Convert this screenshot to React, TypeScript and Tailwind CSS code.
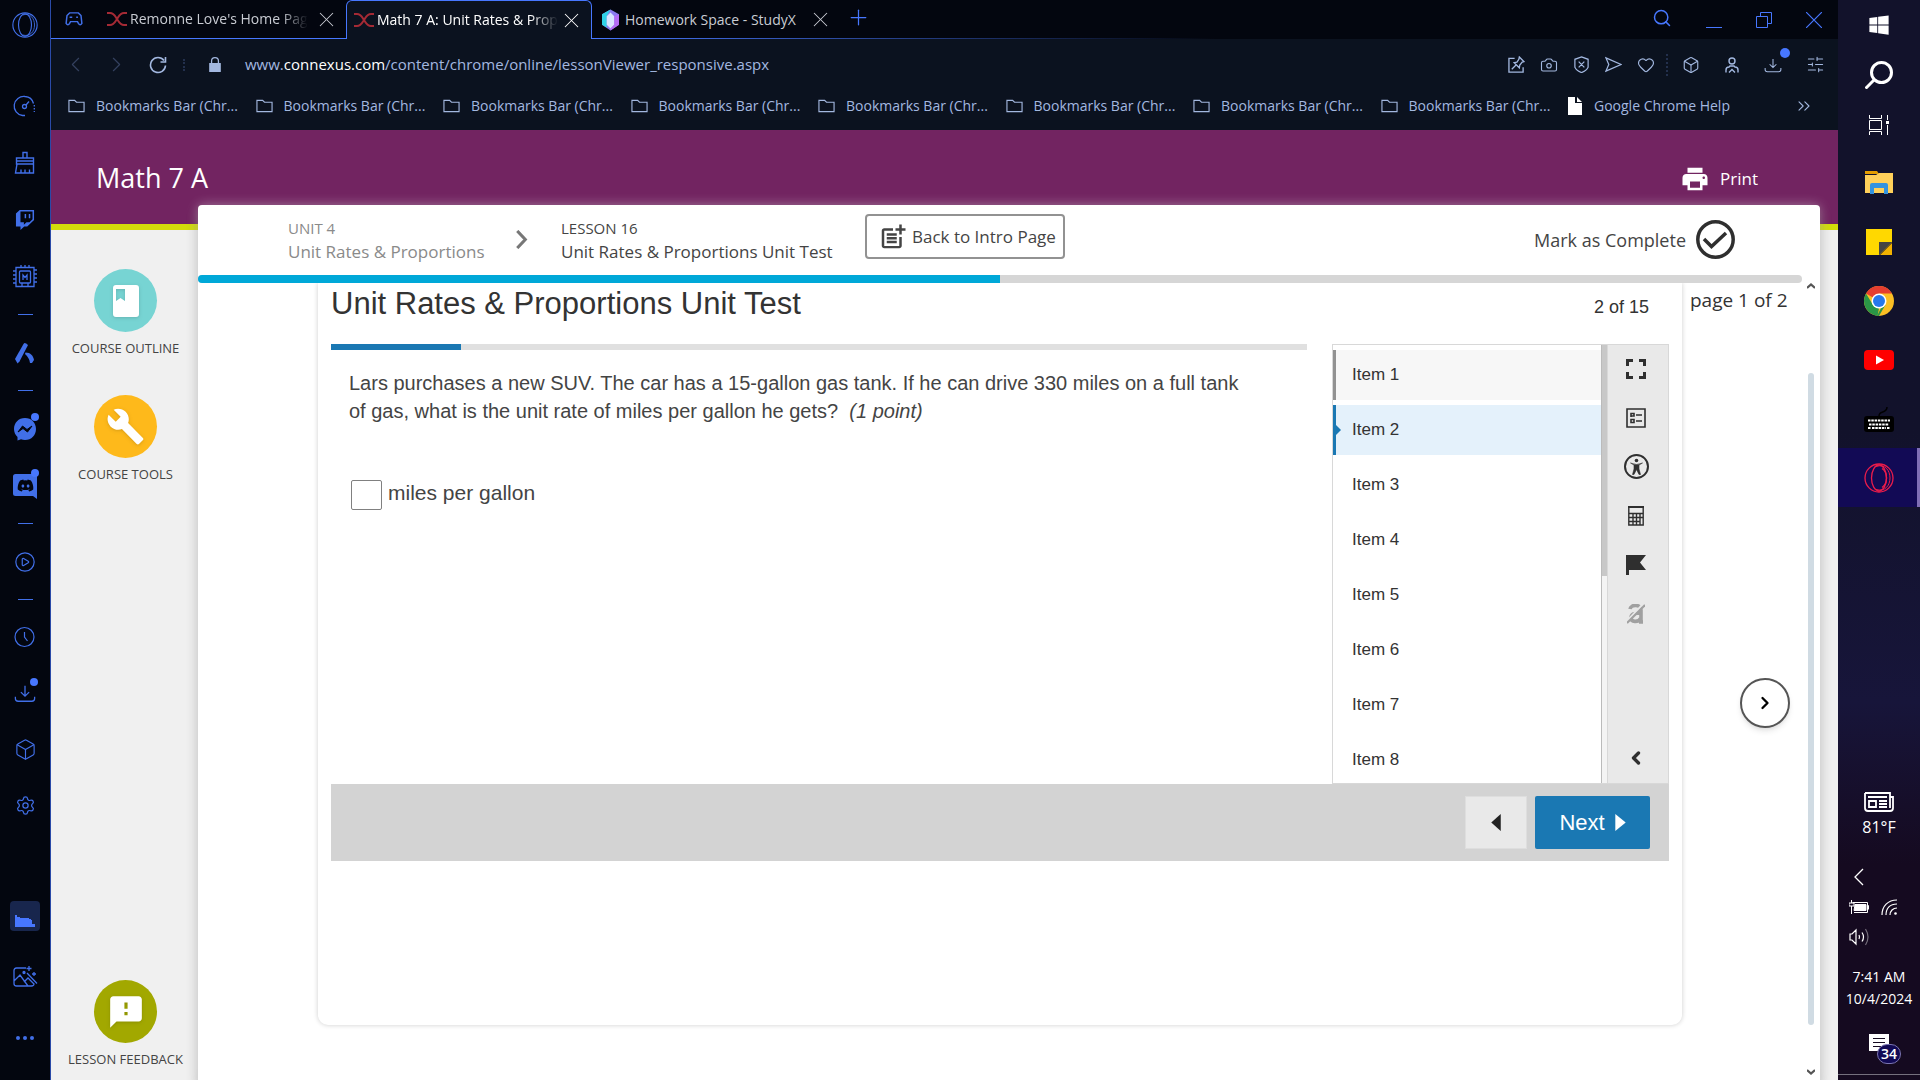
import type { ReactNode } from 'react';
import {
  Box,
  Camera,
  ChevronLeft,
  ChevronRight,
  ChevronsRight,
  CirclePlay,
  Heart,
  Plus,
  Search,
  Settings,
  SlidersHorizontal,
  X,
} from 'lucide-react';
import { FaDiscord, FaTwitch, FaWindows } from 'react-icons/fa';
import { MdBuild, MdFeedback, MdPostAdd, MdPrint } from 'react-icons/md';

const bookmarks = Array.from({ length: 8 }, (_, i) => ({ id: i, label: 'Bookmarks Bar (Chr...' }));

const items = Array.from({ length: 8 }, (_, i) => i + 1);

function OperaIcon({ className, inner }: { className: string; inner?: boolean }) {
  return (
    <svg viewBox="0 0 30 30" className={className} fill="none" stroke="currentColor" strokeWidth="1.3">
      <circle cx="15" cy="15" r="14" />
      <ellipse cx="15" cy="15" rx="7.5" ry="13" />
      {inner && <path d="M18 5.5c6 4 6 15 0 19" />}
      <path d="M12 3.5c9-3 14 4 14 11.5s-5 14-14 11.5" strokeWidth="1" />
    </svg>
  );
}

function Dot() {
  return <span className="absolute -top-1 -right-0.5 size-2 rounded-full bg-[#4777ff]" />;
}

function GaugeIcon() {
  return (
    <svg viewBox="0 0 24 24" className="size-6" fill="none" stroke="currentColor" strokeWidth="1.3">
      <path d="M12 21.5H9.5A9.5 9.5 0 0 1 12 2.5a9.5 9.5 0 0 1 8.5 7" />
      <path d="M21.3 11v7" strokeDasharray="1.5 1.5" />
      <circle cx="11.5" cy="12.5" r="2" />
      <path d="m13 11 3-3.5" />
    </svg>
  );
}

function BrushIcon() {
  return (
    <svg viewBox="0 0 24 24" className="size-6" fill="none" stroke="currentColor" strokeWidth="1.4">
      <path d="M10 7V1.5h4V7M3.5 7h17v6h-17zM3.5 10h17M4 13 2.5 22h18v-9M8 21.5v-3M12 21.5v-3M16.5 21.5v-3" />
    </svg>
  );
}

function ChipIcon() {
  return (
    <svg viewBox="0 0 26 26" className="size-[26px]" fill="none" stroke="currentColor" strokeWidth="1.3">
      <path d="M4 3.5h18v19H4z" />
      <rect x="7.5" y="7" width="11" height="12" rx="1" />
      <path d="M11 16v-5l2 2.5 2-2.5v5M9 1v2M13 1v2M17 1v2M1 7h3M1 11h3M1 15h3M1 19h3M22 6h3M22 10h3M22 14h3M22 18h3M10 19v3M16 19v3" />
    </svg>
  );
}

function AriaIcon() {
  return (
    <svg viewBox="0 0 24 24" className="size-6" fill="currentColor">
      <path d="M10.5 3q1-1.5 2.5-.5L15 4 6.5 20.5l-2 2L2 18z" />
      <path d="M12.5 11.5c5 0 8 3.5 8.5 7.5l-2 3h-2c-.5-4-2-6-5-9z" />
    </svg>
  );
}

function MessengerIcon() {
  return (
    <svg viewBox="0 0 24 24" className="size-6" fill="currentColor">
      <path d="M12 1C5.5 1 1 5.8 1 12c0 3.3 1.3 6 3.5 8v3.5L8 22.3c1.2.4 2.6.7 4 .7 6.5 0 11-4.8 11-11S18.5 1 12 1Z" />
      <path d="m5 15 4.5-6 4.5 3.5L19 9l-4.500 6-4.500-3.500z" fill="#03060f" stroke="#03060f" />
    </svg>
  );
}

function DiscordIcon() {
  return (
    <span className="grid place-items-center text-[#03060f]">
      <svg viewBox="0 0 24 26" className="col-start-1 row-start-1 h-[26px] w-6" fill="#416fe8">
        <path d="M2.5 1h19Q24 1 24 3.5V26l-4-3H2.5Q0 23 0 20.5v-17Q0 1 2.5 1Z" />
      </svg>
      <FaDiscord size={17} className="col-start-1 row-start-1" />
    </span>
  );
}

function ClockIcon() {
  return (
    <svg viewBox="0 0 24 24" className="size-6" fill="none" stroke="currentColor" strokeWidth="1.2">
      <circle cx="11.5" cy="12" r="9.5" />
      <path d="M11.5 7v5l3 4" />
    </svg>
  );
}

function DownloadIcon({ className }: { className: string }) {
  return (
    <svg viewBox="0 0 24 24" className={className} fill="none" stroke="currentColor" strokeWidth="1.4">
      <path d="M12 4v11M7.5 11l4.5 4.5 4.5-4.5M1.500 16v2q0 3 3 3h15q3 0 3-3v-2" />
    </svg>
  );
}

function ImageIcon() {
  return (
    <svg viewBox="0 0 26 26" className="size-[26px]" fill="none" stroke="currentColor" strokeWidth="1.3">
      <path d="M14 4H4.5Q2 4 2 6.5v13Q2 22 4.5 22h15q2.5 0 2.5-2.5M2 17l6-6 8 11M12 18l4-4 6 6M15 9l10 10.5M17 2v5M14.5 4.5h5M22 8v4M20 10h4" />
      <circle cx="12" cy="8.5" r="1" fill="currentColor" />
    </svg>
  );
}

function StudentFavicon() {
  return (
    <svg viewBox="0 0 20 14" className="h-3.5 w-5 shrink-0" fill="none" stroke="#a52a35" strokeWidth="2">
      <path d="M0 1h3c4 0 5 3 7 6s3 6 7 6h3M20 1h-3c-4 0-5 3-7 6s-3 6-7 6H0" />
    </svg>
  );
}

function GemFavicon() {
  return (
    <svg viewBox="0 0 18 22" className="h-[22px] w-[17px] shrink-0">
      <path d="m9 0 9 5v11l-9 6-9-6V5z" fill="#8b7bf0" />
      <path d="M9 0 0 5v11l5 3V7z" fill="#2fd3e8" />
      <path d="m5 7 4-4 4 4v9l-4 4-4-4z" fill="#d9e4ff" />
      <path d="m13 7 5-2v11l-9 6v-2l4-4z" fill="#b56cf5" />
    </svg>
  );
}

function Slot({ children, label, tall }: { children: ReactNode; label: string; tall?: boolean }) {
  return (
    <button
      aria-label={label}
      className={`flex w-full shrink-0 items-center justify-center ${tall ? 'h-[57px]' : 'h-14'}`}
    >
      {children}
    </button>
  );
}

function Divider() {
  return (
    <div className="flex h-[19px] shrink-0 items-center justify-center">
      <span className="h-px w-[15px] bg-[#416fe8]" />
    </div>
  );
}

function OperaSidebar() {
  return (
    <nav className="flex w-[51px] shrink-0 flex-col border-r border-[#2a4aa8] bg-[#03060f] text-[#416fe8]">
      <button aria-label="Opera menu" className="mb-[27px] flex h-[50px] shrink-0 items-center justify-center">
        <OperaIcon className="size-[26px]" />
      </button>
      <Slot tall label="Limiter"><GaugeIcon /></Slot>
      <Slot tall label="Cleaner"><BrushIcon /></Slot>
      <Slot tall label="Twitch"><FaTwitch size={20} /></Slot>
      <Slot tall label="Mods"><ChipIcon /></Slot>
      <Divider />
      <Slot tall label="Aria"><AriaIcon /></Slot>
      <Divider />
      <Slot tall label="Messenger">
        <span className="relative"><MessengerIcon /><Dot /></span>
      </Slot>
      <Slot tall label="Discord">
        <span className="relative"><DiscordIcon /><Dot /></span>
      </Slot>
      <Divider />
      <Slot tall label="Player"><CirclePlay size={22} strokeWidth={1.3} /></Slot>
      <Divider />
      <Slot label="History"><ClockIcon /></Slot>
      <Slot label="Downloads">
        <span className="relative"><DownloadIcon className="size-[22px]" /><Dot /></span>
      </Slot>
      <Slot label="Extensions"><Box size={23} strokeWidth={1.2} /></Slot>
      <Slot label="Settings"><Settings size={21} strokeWidth={1.4} /></Slot>
      <div className="mt-auto flex flex-col gap-[5px] pb-3.5">
        <Slot label="Wallpaper">
          <span className="flex size-[30px] items-end justify-center rounded bg-[#18264d] pb-1">
            <svg viewBox="0 0 20 12" className="h-3 w-5" fill="#4777ff">
              <path d="M0 0h2v2h3v1h9v1h2v1h1v4h3v3H0z" />
            </svg>
          </span>
        </Slot>
        <Slot label="Image tools"><ImageIcon /></Slot>
        <Slot label="More">
          <span className="flex gap-[3px]">
            <span className="size-1 rounded-full bg-current" />
            <span className="size-1 rounded-full bg-current" />
            <span className="size-1 rounded-full bg-current" />
          </span>
        </Slot>
      </div>
    </nav>
  );
}

function CloseTab() {
  return (
    <button aria-label="Close tab" className="mr-[7px] ml-auto">
      <X size={25} strokeWidth={1} />
    </button>
  );
}

function TabBar() {
  return (
    <div className="flex h-[39px] text-sm whitespace-nowrap text-[#c9ccd3]">
      <div className="flex w-[295px] items-center border-b border-[#4777ff]">
        <svg viewBox="0 0 20 16" className="mr-6 ml-[14px] h-3.5 w-[18px] text-[#416fe8]" fill="none" stroke="currentColor" strokeWidth="1.7">
          <path d="M5 1h10l3 3 1 9q-2 3-4 0l-1-2H6l-1 2q-2 3-4 0l1-9z" />
          <path d="M5 6h3M12.500 6h2" />
        </svg>
        <StudentFavicon />
        <span className="ml-[3px] mask-r-from-85%">Remonne Love's Home Pag</span>
        <CloseTab />
      </div>
      <div className="flex w-[246px] items-center rounded-t-md border border-b-0 border-[#4777ff] bg-[#0b121f] pl-[7px] text-white">
        <StudentFavicon />
        <span className="ml-[3px] mask-r-from-85%">Math 7 A: Unit Rates &amp; Prop</span>
        <CloseTab />
      </div>
      <div className="relative flex flex-1 items-center pl-[10px]">
        <GemFavicon />
        <span className="ml-1.5 w-[178px]">Homework Space - StudyX</span>
        <button aria-label="Close tab" className="ml-[5px]"><X size={25} strokeWidth={1} /></button>
        <button aria-label="New tab" className="ml-[13px] pb-1 text-[#4777ff]"><Plus size={25} strokeWidth={1.2} /></button>
        <div className="absolute bottom-0 left-0 h-px w-1/2 bg-linear-to-r from-[#4777ff] to-transparent" />
        <div className="mr-4 ml-auto flex items-center gap-[34px] text-[#4777ff]">
          <button aria-label="Search tabs" className="pb-1">
            <Search size={20} strokeWidth={1.8} />
          </button>
          <button aria-label="Minimize" className="h-4 w-4 border-b border-current" />
          <button aria-label="Restore">
            <svg viewBox="0 0 16 16" className="size-4" fill="none" stroke="currentColor">
              <path d="M.5 4.5h11v11H.5zM4.5 4V.5h11v11H12" />
            </svg>
          </button>
          <button aria-label="Close window">
            <svg viewBox="0 0 16 16" className="size-4" fill="none" stroke="currentColor" strokeWidth="1.2">
              <path d="m0 0 16 16M16 0 0 16" />
            </svg>
          </button>
        </div>
      </div>
    </div>
  );
}

function DottedLine() {
  return <span className="h-3 w-0 border-l-2 border-dotted border-[#23304d]" />;
}

function AddressBar() {
  return (
    <div className="flex h-[51px] items-center bg-[#0b121f] pr-[13px] pl-3 text-[#a3b8e0]">
      <button aria-label="Back" className="text-[#34415f]"><ChevronLeft size={25} strokeWidth={1.1} /></button>
      <button aria-label="Forward" className="ml-4 text-[#34415f]"><ChevronRight size={25} strokeWidth={1.1} /></button>
      <button aria-label="Reload" className="mr-4 ml-5">
        <svg viewBox="0 0 18 18" className="size-[18px]" fill="none" stroke="currentColor" strokeWidth="1.6">
          <path d="M15 4.5A7.5 7.5 0 1 0 16.5 9.5M16.5 1v5h-5" />
        </svg>
      </button>
      <DottedLine />
      <svg viewBox="0 0 14 18" className="mr-6 ml-6 h-[17px] w-3" fill="none" stroke="currentColor" strokeWidth="1.5">
        <path d="M3 8V5a4 4 0 0 1 8 0v3" />
        <rect x="1" y="8" width="12" height="9" fill="currentColor" />
      </svg>
      <span className="flex-1 text-[15px]">
        www.<span className="text-white">connexus.com</span>/content/chrome/online/lessonViewer_responsive.aspx
      </span>
      <div className="flex items-center gap-[15px]">
        <svg viewBox="0 0 18 18" className="size-[17px]" fill="none" stroke="currentColor" strokeWidth="1.4">
          <path d="M7 2.5H1V17h15v-5M12 1l5 5-2 .5-2.5 3-.5 3L6.5 7l3-.5 2-3zM8.5 9.5 4 14" />
        </svg>
        <Camera size={18} strokeWidth={1.5} />
        <svg viewBox="0 0 18 18" className="size-[17px]" fill="none" stroke="currentColor" strokeWidth="1.3">
          <path d="m9 1 7 2.5V12q-2 4-7 5.5Q4 16 2 12V3.500zM6 6l6 6M12 6l-6 6" />
        </svg>
        <svg viewBox="0 0 18 18" className="size-[17px]" fill="none" stroke="currentColor" strokeWidth="1.3">
          <path d="m1 2 16 7L1 16l3-7z" />
        </svg>
        <Heart size={18} strokeWidth={1.5} />
      </div>
      <span className="ml-[11px]"><DottedLine /></span>
      <div className="ml-[14px] flex items-center gap-6">
        <Box size={18} strokeWidth={1.5} />
        <svg viewBox="0 0 16 16" className="size-4" fill="none" stroke="currentColor" strokeWidth="1.4">
          <circle cx="8" cy="4" r="3" />
          <path d="M2 15.5V13q0-3 3-3l1-1h4l1 1q3 0 3 3v2.5M5 15.5l3-3 3 3" />
        </svg>
        <span className="relative">
          <DownloadIcon className="size-[18px]" />
          <span className="absolute -top-2 -right-2 size-2.5 rounded-full bg-[#4777ff]" />
        </span>
        <SlidersHorizontal size={19} strokeWidth={1.3} />
      </div>
    </div>
  );
}

function BookmarksBar() {
  return (
    <div className="flex h-10 items-center bg-[#0b121f] pr-6 pb-2 pl-[17px] text-sm whitespace-nowrap text-[#a3b8e0]">
      <div className="flex w-[1500px]">
        {bookmarks.map((b) => (
          <a key={b.id} href="#" className="flex flex-1 items-center gap-[11px]">
            <svg viewBox="0 0 18 14" className="h-[14px] w-[17px]" fill="none" stroke="currentColor" strokeWidth="1.2">
              <path d="M1 1h6l2 2h8v10H1z" />
            </svg>
            {b.label}
          </a>
        ))}
      </div>
      <a href="#" className="flex items-center gap-3">
        <svg viewBox="0 0 14 18" className="h-[18px] w-[14px]" fill="#fff">
          <path d="M0 0h7v6h7v12H0zM9 0l5 5H9z" />
        </svg>
        Google Chrome Help
      </a>
      <ChevronsRight size={20} strokeWidth={1.3} className="ml-auto" />
    </div>
  );
}

function CourseButton({ color, label, children }: { color: string; label: string; children: ReactNode }) {
  return (
    <button className="flex flex-col items-center gap-1.5 text-[13px] text-[#444]">
      <span className={`flex size-[63px] items-center justify-center rounded-full text-white ${color}`}>
        {children}
      </span>
      <span className="leading-5 whitespace-nowrap">{label}</span>
    </button>
  );
}

function LessonHeader() {
  return (
    <div className="flex h-[70px] shrink-0 items-center pr-[85px] pb-px pl-[90px] text-[#444]">
      <a href="#" className="w-[193px] text-[17px] leading-[23px] whitespace-nowrap text-[#8a8a8a]">
        <span className="block text-[15px]">UNIT 4</span>
        Unit Rates &amp; Proportions
      </a>
      <svg viewBox="0 0 12 20" className="ml-[35px] h-[19px] w-3" fill="none" stroke="#777" strokeWidth="3.2">
        <path d="m1 1 8.5 9L1 19" />
      </svg>
      <a href="#" className="ml-[33px] w-[266px] text-[17px] leading-[23px] whitespace-nowrap">
        <span className="block text-[15px]">LESSON 16</span>
        Unit Rates &amp; Proportions Unit Test
      </a>
      <button className="mb-1.5 ml-[38px] flex h-[45px] w-[200px] items-center gap-1 rounded border-2 border-[#929292] pl-[11px] text-[17px] whitespace-nowrap">
        <MdPostAdd size={30} className="shrink-0" />
        Back to Intro Page
      </button>
      <button className="ml-auto flex items-center gap-2.5 text-lg whitespace-nowrap">
        Mark as Complete
        <svg viewBox="0 0 39 39" className="size-[39px]" fill="none" stroke="#2f2f2f" strokeWidth="3.5">
          <circle cx="19.5" cy="19.5" r="17.7" />
          <path d="m8 19 7.5 7.5L30 13" />
        </svg>
      </button>
    </div>
  );
}

function ItemList() {
  return (
    <div className="flex w-[275px] overflow-hidden border border-r-0 border-[#d8d8d8]">
      <ol className="flex flex-1 flex-col gap-[5px] pt-[5px] text-[17px] text-[#333]">
        {items.map((n) => (
          <li
            key={n}
            className={`relative flex h-[50px] shrink-0 items-center border-l-3 ${
              n === 1 ? 'border-[#929292] bg-[#f7f7f7]' : n === 2 ? 'border-[#1a78b3] bg-[#e4f1fb]' : 'border-transparent'
            }`}
          >
            {n === 2 && (
              <span className="absolute left-0 border-y-5 border-l-5 border-y-transparent border-l-[#1a78b3]" />
            )}
            <a href="#" className="pl-4">Item {n}</a>
          </li>
        ))}
      </ol>
      <div className="w-1.5 border-l border-[#bbb] bg-[#f4f4f4]">
        <div className="h-[231px] bg-[#c8c8c8]" />
      </div>
    </div>
  );
}

function ToolButton({ label, children }: { label: string; children: ReactNode }) {
  return (
    <button aria-label={label} className="flex h-[49px] items-center justify-center pb-0.5">
      {children}
    </button>
  );
}

function ToolRail() {
  return (
    <div className="flex w-[62px] flex-col border border-[#d8d8d8] bg-[#e9e9e9] pr-1 text-[#2f2f2f]">
      <ToolButton label="Full screen">
        <svg viewBox="0 0 20 20" className="size-5" fill="none" stroke="currentColor" strokeWidth="3">
          <path d="M1.5 7V1.5H7M13 1.5h5.5V7M18.5 13v5.5H13M7 18.5H1.500V13" />
        </svg>
      </ToolButton>
      <ToolButton label="Review">
        <svg viewBox="0 0 20 20" className="size-5" fill="none" stroke="currentColor" strokeWidth="1.6">
          <path d="M1 1h18v18H1zM10 7h6M10 13h6M5 11.5h3v3H5zM5 9V5.5h3V8H5" />
        </svg>
      </ToolButton>
      <ToolButton label="Accessibility">
        <svg viewBox="0 0 25 25" className="size-[25px]" fill="none" stroke="currentColor" strokeWidth="2">
          <circle cx="12.5" cy="12.5" r="11.5" />
          <circle cx="12.5" cy="6.5" r="1.8" fill="currentColor" stroke="none" />
          <path d="M6.5 9q6 3 12 0l-3.5 2v4l1.5 5.5h-1.5l-2.5-5-2.500 5H8.500L10 15v-4z" fill="currentColor" strokeWidth=".6" />
        </svg>
      </ToolButton>
      <ToolButton label="Calculator">
        <svg viewBox="0 0 16 20" className="h-5 w-4" fill="none" stroke="currentColor" strokeWidth="1.4">
          <path d="M.8 1h14.4v18H.8zM1 7.5h14M1 11.5h14M1 15.5h11M5 7v12M8.5 7v12M12 7v12" />
          <path d="M0 1h16" strokeWidth="2" />
        </svg>
      </ToolButton>
      <ToolButton label="Flag">
        <svg viewBox="0 0 20 20" className="size-5" fill="currentColor">
          <path d="M0 0h20l-6 7.5 6 7.5H3v5H0z" />
        </svg>
      </ToolButton>
      <ToolButton label="Eliminate answer">
        <svg viewBox="0 0 18 20" className="h-5 w-[18px] text-[#a0a0a0]" fill="none" stroke="currentColor">
          <path d="M3 5C4 0 14 0 14 6v11M14 9C7 9 4 10 4 14s7 5 10 0M12 18h4" strokeWidth="3.6" />
          <path d="M0 17 16 0" stroke="#e9e9e9" strokeWidth="2" />
          <path d="M0 19 18 1" strokeWidth="2.2" />
        </svg>
      </ToolButton>
      <button aria-label="Collapse tools" className="mt-auto flex h-[50px] items-center justify-center">
        <ChevronLeft size={20} strokeWidth={4} />
      </button>
    </div>
  );
}

function TestCard() {
  return (
    <section className="mb-[55px] ml-[120px] flex flex-1 flex-col rounded-b-[10px] bg-white px-[13px] font-['Liberation_Sans',Arial,sans-serif] text-[#333] shadow-[0_0_5px_rgba(0,0,0,0.2)]">
      <div className="flex h-[61px] justify-between pr-5">
        <h1 className="text-[31px] leading-[42px] whitespace-nowrap">Unit Rates &amp; Proportions Unit Test</h1>
        <span className="text-lg leading-[48px]">2 of 15</span>
      </div>
      <div className="flex h-[440px]">
        <div className="mr-[25px] flex-1">
          <div className="h-1.5 bg-[#e0e0e0]">
            <div className="h-full w-[130px] bg-[#1a78b3]" />
          </div>
          <div className="pt-[19px] pr-14 pl-[18px] text-xl leading-7 text-[#444]">
            <p>
              Lars purchases a new SUV. The car has a 15-gallon gas tank. If he can drive 330 miles on a full tank of gas,
              what is the unit rate of miles per gallon he gets?&nbsp; <em>(1 point)</em>
            </p>
            <div className="mt-[55px] flex gap-1.5">
              <input
                id="answer"
                className="ml-0.5 h-[30px] w-[31px] rounded-xs border border-[#808080] bg-white px-1 text-base"
              />
              <label htmlFor="answer" className="text-[21px] leading-[26px]">miles per gallon</label>
            </div>
          </div>
        </div>
        <ItemList />
        <ToolRail />
      </div>
      <div className="flex h-[77px] justify-end gap-2 bg-[#d3d3d3] pt-3 pr-[19px] pb-3">
        <button aria-label="Previous" className="flex w-[62px] items-center justify-center border border-[#dedede] bg-[#e9e9e9]">
          <svg viewBox="0 0 10 18" className="h-[17px] w-2.5" fill="#222">
            <path d="M10 0v18L0 9z" />
          </svg>
        </button>
        <button className="flex w-[115px] items-center justify-center gap-2.5 rounded-xs bg-[#1a78b3] text-[22px] text-white">
          Next
          <svg viewBox="0 0 11 18" className="h-[17px] w-[11px]" fill="#fff">
            <path d="M0 0v18l11-9z" />
          </svg>
        </button>
      </div>
    </section>
  );
}

function ScrollArrow({ down }: { down?: boolean }) {
  return (
    <svg viewBox="0 0 8 6" className="h-1.5 w-2" fill="none" stroke="#555" strokeWidth="2.2">
      <path d={down ? 'm0 1 4 3.5L8 1' : 'm0 5 4-3.5L8 5'} />
    </svg>
  );
}

function LessonPage() {
  return (
    <main className="flex flex-1 flex-col bg-[linear-gradient(#722461_94px,#d3dc0a_94px,#d3dc0a_100px,#f0f0f0_100px)]">
      <header className="flex h-[75px] items-center justify-between pt-[22px] pr-20 pl-[45px] text-white">
        <span className="text-[27px]">Math 7 A</span>
        <button className="flex items-center gap-2.5 text-[17px]">
          <MdPrint size={30} />
          Print
        </button>
      </header>
      <div className="flex flex-1">
        <aside className="flex w-[147px] flex-col items-center pt-16 pb-[11px] pl-0.5">
          <div className="flex flex-col gap-[37px]">
            <CourseButton color="bg-[#77d4d3]" label="COURSE OUTLINE">
              <svg viewBox="0 0 26 32" className="h-8 w-[26px] drop-shadow" fill="#fff">
                <path fillRule="evenodd" d="M3 0h20q3 0 3 3v26q0 3-3 3H3q-3 0-3-3V3q0-3 3-3zm0 4v12l4.5-3 4.5 3V4z" />
              </svg>
            </CourseButton>
            <CourseButton color="bg-[#feb91b]" label="COURSE TOOLS">
              <MdBuild size={39} className="drop-shadow" />
            </CourseButton>
          </div>
          <div className="mt-auto">
            <CourseButton color="bg-[#a2a800]" label="LESSON FEEDBACK">
              <MdFeedback size={38} className="drop-shadow" />
            </CourseButton>
          </div>
        </aside>
        <div className="mr-[18px] flex flex-1 flex-col rounded-t bg-white shadow-[0_0_12px_rgba(255,255,255,0.4),0_6px_12px_rgba(0,0,0,0.3)]">
          <LessonHeader />
          <div className="mr-[18px] h-2 shrink-0 overflow-hidden rounded-full bg-[#d6d6d6]">
            <div className="h-full w-1/2 bg-[#00a8d8]" />
          </div>
          <div className="flex flex-1 overflow-hidden">
            <TestCard />
            <div className="flex w-[120px] flex-col items-end pr-3">
              <p className="w-full pl-2 text-[19px] leading-[34px] whitespace-nowrap text-[#333]">page 1 of 2</p>
              <button
                aria-label="Next page"
                className="mt-[361px] flex size-[50px] items-center justify-center rounded-full border-2 border-[#555] bg-white text-black shadow-md"
              >
                <ChevronRight size={20} strokeWidth={2.8} />
              </button>
            </div>
            <div className="flex w-[18px] flex-col items-center pb-[5px]">
              <ScrollArrow />
              <div className="mt-[84px] mb-11 w-1.5 flex-1 rounded-full bg-[#d0dbe3]" />
              <ScrollArrow down />
            </div>
          </div>
        </div>
      </div>
    </main>
  );
}

function TaskButton({ label, active, children }: { label: string; active?: boolean; children: ReactNode }) {
  return (
    <button
      aria-label={label}
      className={`flex h-[59px] shrink-0 items-center justify-center ${
        active ? 'border-r-3 border-[#7f6fb5] bg-[#120a55] pl-[3px]' : ''
      }`}
    >
      {children}
    </button>
  );
}

function Taskbar() {
  return (
    <aside className="flex w-[82px] shrink-0 flex-col bg-linear-to-b from-[#12122b] from-40% via-[#17153a] via-65% to-[#150a20] to-80% text-white">
      <button aria-label="Start" className="flex h-[50px] items-center justify-center"><FaWindows size={22} /></button>
      <button aria-label="Search" className="flex h-[50px] items-center justify-center">
        <svg viewBox="0 0 28 28" className="size-7" fill="none" stroke="currentColor" strokeWidth="3">
          <circle cx="16.5" cy="11.5" r="10" />
          <path d="m9.5 18.5-9 9" />
        </svg>
      </button>
      <button aria-label="Task view" className="mb-1 flex h-[49px] items-center justify-center">
        <svg viewBox="0 0 20 20" className="size-5" fill="none" stroke="currentColor">
          <path d="M.5 0v3.5h12V0M.5 5.5h12v9H.5zM.5 20v-3.5h12V20M18.5 0v5M18.5 10v10" />
          <path d="M17 6h3v3h-3z" fill="currentColor" stroke="none" />
        </svg>
      </button>
      <TaskButton label="File Explorer">
        <svg viewBox="0 0 28 24" className="h-6 w-7">
          <path d="M0 0h12l2 3H0z" fill="#e59d00" />
          <path d="M0 4h11l3-2h14v20H0z" fill="#ffd05a" />
          <path d="M5 23V14q0-2 2-2h14q2 0 2 2v9h-4v-6H9v6z" fill="#3393df" />
        </svg>
      </TaskButton>
      <TaskButton label="Sticky Notes">
        <svg viewBox="0 0 26 26" className="size-[26px]">
          <path d="M0 0h26v13l-13 13H0z" fill="#ffd800" />
          <path d="M26 14v12H14z" fill="#f3b200" />
          <path d="M13 13h13L13 26z" fill="#444" />
        </svg>
      </TaskButton>
      <TaskButton label="Chrome">
        <svg viewBox="0 0 30 30" className="size-[30px]">
          <circle cx="15" cy="15" r="15" fill="#fbbf24" />
          <path d="M15 15 2 7.5A15 15 0 0 1 28 7.5H15z" fill="#e53e30" />
          <path d="M2 7.5 9 19l6 3.5-1.5 7.4A15 15 0 0 1 2 7.5z" fill="#2a9646" />
          <path d="m21.5 18.7-6.5 11.3-2-.1 4-8z" fill="#2a9646" />
          <circle cx="15" cy="15" r="7.5" fill="#fff" />
          <circle cx="15" cy="15" r="6" fill="#2878eb" />
        </svg>
      </TaskButton>
      <TaskButton label="YouTube">
        <svg viewBox="0 0 30 20" className="h-5 w-[30px]">
          <rect width="30" height="20" rx="4" fill="#f00" />
          <path d="m12 5.5 8 4.5-8 4.5z" fill="#fff" />
        </svg>
      </TaskButton>
      <TaskButton label="Keyboard">
        <svg viewBox="0 0 30 26" className="h-[26px] w-[30px]">
          <path d="M15 10c0-6 8-2 8-9" stroke="#000" strokeWidth="1.5" fill="none" />
          <rect y="10" width="30" height="16" rx="3" fill="#000" />
          <path d="M4 14.5h22M5 18.5h20M4 22h3M8 22h14M23 22h3" stroke="#fff" strokeWidth="2" strokeDasharray="2.5 .8" />
        </svg>
      </TaskButton>
      <TaskButton active label="Opera GX">
        <OperaIcon inner className="size-[30px] text-[#ec1c4b]" />
      </TaskButton>
      <div className="mt-auto flex flex-col items-center">
        <svg viewBox="0 0 30 20" className="h-5 w-[30px]" fill="none" stroke="currentColor" strokeWidth="1.8">
          <path d="M1 1h25v15M1 1v15q0 3 3 3h22q3 0 3-3V5h-3M4 5h19M5 9h7v6H5zM15 9h8M15 12h8M15 15h8" />
        </svg>
        <span className="mt-[3px] text-base leading-6">81°F</span>
        <div className="mt-[29px] grid w-[60px] grid-cols-2 gap-y-[13px]">
          <svg viewBox="0 0 20 18" className="col-span-2 h-[18px] w-5" fill="none" stroke="currentColor" strokeWidth="1.3">
            <path d="m14 1-8 8 8 8" />
          </svg>
          <svg viewBox="0 0 20 14" className="h-4 w-5" fill="none" stroke="currentColor">
            <path d="M3.5 2.5h15v10H5M18.5 5.5h1v4M2.5 0v3M0 3h5v3H0zM2.5 6v8" />
            <path d="M6 4.5h11v6H5z" fill="currentColor" />
          </svg>
          <svg viewBox="0 0 16 16" className="ml-0.5 size-4" fill="none" stroke="currentColor" strokeWidth="1.2">
            <path d="M1 16C1 7 7 1 16 1M5 16C5 9 9 5 16 5M9 16c0-4 3-7 7-7" />
            <circle cx="14.5" cy="14.5" r="1.3" fill="currentColor" stroke="none" />
          </svg>
          <svg viewBox="0 0 20 18" className="h-[18px] w-5" fill="none" stroke="currentColor" strokeWidth="1.2">
            <path d="M1 6h2l4-4v14l-4-4H1zM10 7q1 2 0 4M13 4.5q3 4.5 0 9" />
            <path d="M16.5 1q5 8 0 16" opacity=".4" />
          </svg>
        </div>
        <div className="mt-5 text-center text-sm leading-[22px]">
          <div>7:41 AM</div>
          <div>10/4/2024</div>
        </div>
        <button aria-label="Notifications" className="relative mt-6 mb-[22px] h-[18px] w-5">
          <svg viewBox="0 0 20 18" className="h-[18px] w-5" fill="#fff">
            <path d="M0 0h20v17H0z" />
            <path d="M4 4.5h12M4 8.5h12M4 12.5h8" stroke="#150a20" />
          </svg>
          <span className="absolute top-2.5 left-2 flex h-5 w-6 items-center justify-center rounded-full border border-[#7a74b0] bg-[#120a55] text-sm font-semibold">
            34
          </span>
        </button>
        <div className="mb-[5px] h-px w-full bg-[#75707e]" />
      </div>
    </aside>
  );
}

export default function App() {
  return (
    <div className="flex min-h-screen bg-[#03060f] font-['Open_Sans','Noto_Sans',sans-serif]">
      <OperaSidebar />
      <div className="flex min-w-0 flex-1 flex-col">
        <TabBar />
        <AddressBar />
        <BookmarksBar />
        <LessonPage />
      </div>
      <Taskbar />
    </div>
  );
}
